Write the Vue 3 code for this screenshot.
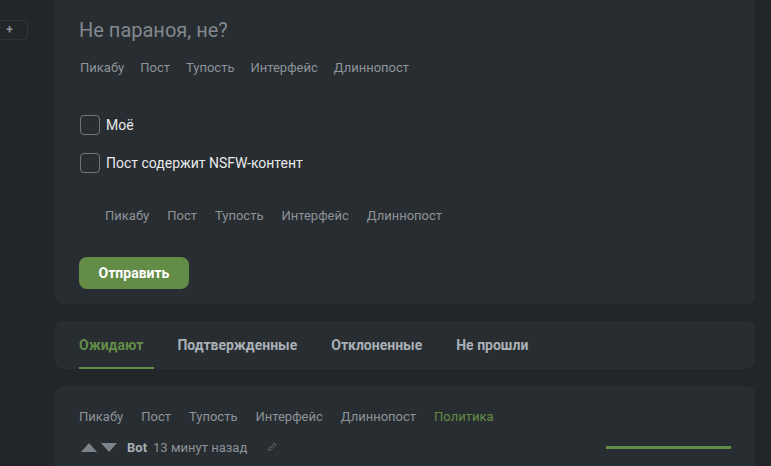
<template>
  <div class="page">
    <aside class="side">
      <button class="plus">+</button>
    </aside>
    <main class="content">
      <section class="card form">
        <div class="head">
          <h1 class="title">Не параноя, не?</h1>
          <div class="tags">
            <a v-for="t in tags" :key="t" class="tag">{{ t }}</a>
          </div>
        </div>
        <div class="body">
          <label class="check"><span class="box"></span>Моё</label>
          <label class="check"><span class="box"></span>Пост содержит NSFW-контент</label>
          <div class="tagbox">
            <a v-for="t in tags" :key="t" class="tag">{{ t }}</a>
          </div>
          <button class="send">Отправить</button>
        </div>
      </section>

      <nav class="card tabs">
        <a v-for="(t, i) in tabs" :key="t" class="tab" :class="{ active: i === 0 }">{{ t }}</a>
      </nav>

      <section class="card post">
        <div class="post-tags">
          <a v-for="t in tags" :key="t" class="tag">{{ t }}</a>
          <a class="tag green">Политика</a>
        </div>
        <div class="meta">
          <svg class="arrow" width="16" height="9" viewBox="0 0 16 9"><path d="M8 0l8 9H0z" /></svg>
          <svg class="arrow" width="16" height="9" viewBox="0 0 16 9"><path d="M0 0h16L8 9z" /></svg>
          <b class="author">Bot</b>
          <span class="time">13 минут назад</span>
          <svg class="link" width="10" height="10" viewBox="0 0 10 10" fill="none" stroke="#6d757b" stroke-width="1">
            <path d="M4.2 5.8L5.8 4.2M3.6 4.6L1.7 6.5a1.3 1.3 0 0 0 1.8 1.8l1.9-1.9M6.4 5.4l1.9-1.9a1.3 1.3 0 0 0-1.8-1.8L4.6 3.6" />
          </svg>
          <span class="bar"></span>
        </div>
      </section>
    </main>
  </div>
</template>

<script setup>
const tags = ['Пикабу', 'Пост', 'Тупость', 'Интерфейс', 'Длиннопост']
const tabs = ['Ожидают', 'Подтвержденные', 'Отклоненные', 'Не прошли']
</script>

<style>
html, body { margin: 0; background: #222629; overflow: hidden; }
</style>

<style scoped>
.page {
  display: flex;
  height: 466px;
  overflow: hidden;
  font-family: Roboto, sans-serif;
  color: #8d9399;
}
.side {
  width: 55px;
  flex: none;
  padding-top: 20px;
  box-sizing: border-box;
}
.plus {
  display: block;
  width: 28px;
  height: 20px;
  margin: 0;
  padding: 0 8px 0 0;
  background: none;
  border: 1px solid #2f3438;
  border-left: 0;
  border-radius: 0 4px 4px 0;
  color: #8d9399;
  font: 700 12px Roboto, sans-serif;
}
.content {
  width: 700px;
  flex: none;
}
.card {
  background: #282d31;
  border-radius: 8px;
  margin-bottom: 17px;
}
.form {
  height: 304px;
  margin-top: 0;
  border-radius: 0 0 8px 8px;
}
.head {
  height: 97px;
  padding: 0 24px;
  border-bottom: 1px solid #25292d;
  box-sizing: content-box;
}
.title {
  margin: 0;
  padding-top: 18px;
  font-size: 20px;
  line-height: 24px;
  font-weight: 400;
  color: #82888e;
}
.tags {
  display: flex;
  gap: 16px;
  margin-top: 18px;
  padding-left: 1px;
}
.tag {
  font-size: 13px;
  line-height: 16px;
  color: #8d9399;
}
.body {
  padding: 17px 24px 0;
}
.check {
  display: flex;
  align-items: center;
  gap: 6px;
  height: 20px;
  margin-bottom: 18px;
  padding-left: 1px;
  font-size: 14px;
  color: #e8e9ea;
}
.box {
  width: 18px;
  height: 18px;
  border: 1px solid #6d757b;
  border-radius: 4px;
}
.tagbox {
  display: flex;
  gap: 18px;
  align-items: center;
  height: 47px;
  margin-left: 0;
  padding-left: 25px;
  border: 1px solid #25292d;
  border-radius: 8px;
}
.send {
  display: block;
  width: 110px;
  height: 32px;
  margin-top: 17px;
  border: 0;
  border-radius: 8px;
  background: #638c47;
  color: #fff;
  font: 700 14px Roboto, sans-serif;
}
.tabs {
  display: flex;
  gap: 34px;
  height: 48px;
  padding: 0 24px;
}
.tab {
  position: relative;
  padding-top: 15px;
  font-size: 14px;
  line-height: 18px;
  font-weight: 700;
  color: #a9b0b6;
}
.tab.active {
  color: #638c47;
}
.tab.active::after {
  content: '';
  position: absolute;
  left: 0;
  right: -11px;
  bottom: 0;
  height: 2px;
  background: #638c47;
}
.post {
  height: 100px;
  padding: 23px 24px 0;
  margin-bottom: 0;
}
.post-tags {
  display: flex;
  gap: 18px;
}
.green {
  color: #638c47;
}
.meta {
  display: flex;
  align-items: center;
  margin-top: 13px;
  height: 18px;
}
.arrow {
  fill: #7c8389;
  margin-left: 2px;
  margin-right: 2px;
}
.author {
  margin-left: 8px;
  font-size: 13px;
  color: #a9b0b6;
}
.time {
  margin-left: 6px;
  font-size: 13px;
  color: #8d9399;
}
.link {
  margin-left: 20px;
}
.bar {
  margin-left: auto;
  width: 125px;
  height: 3px;
  background: #638c47;
}
</style>
